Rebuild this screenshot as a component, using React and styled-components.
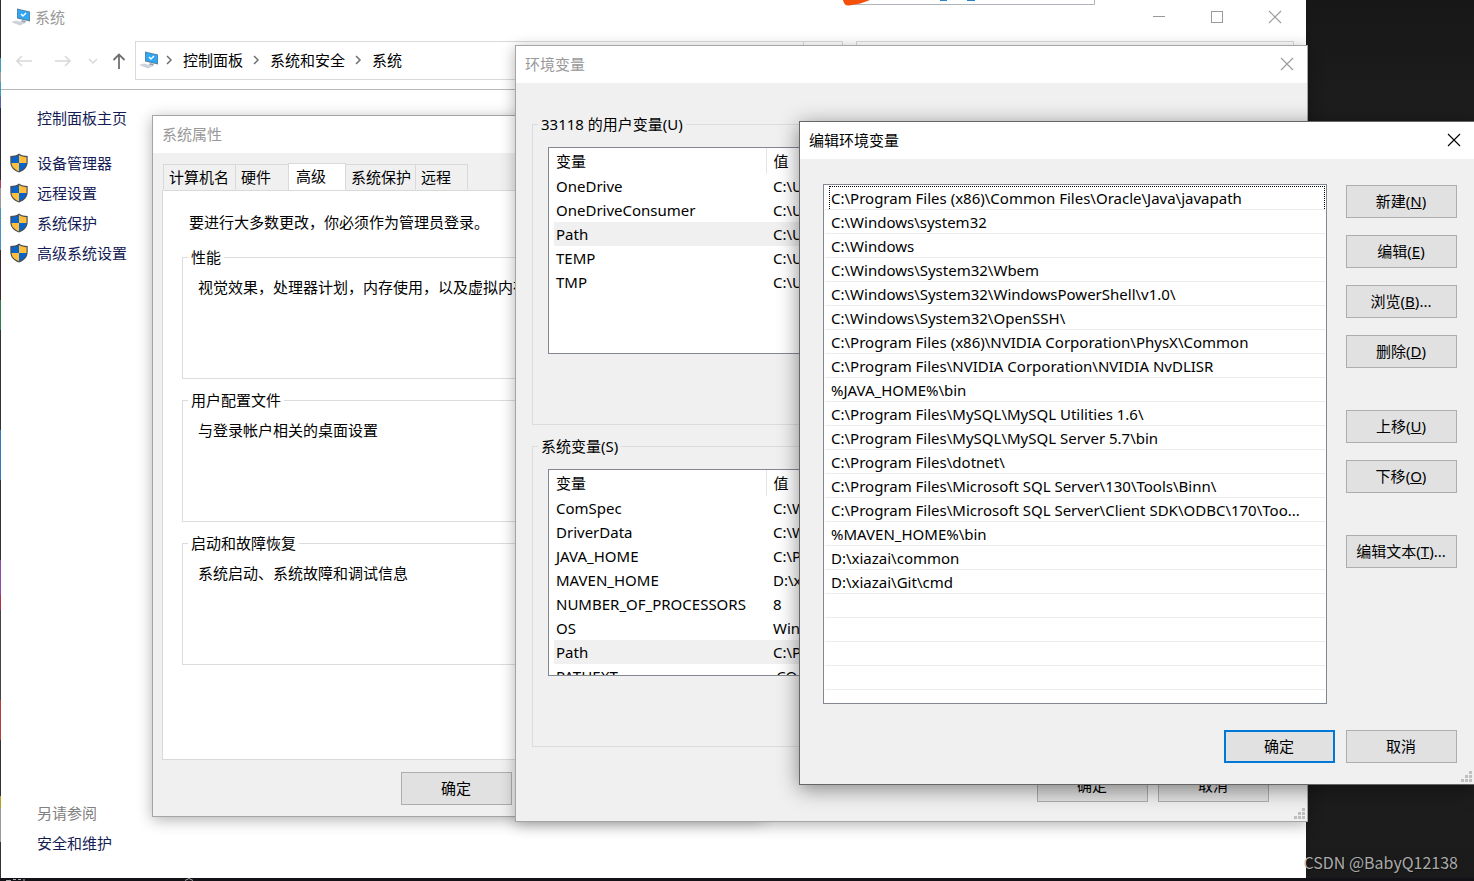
import React from 'react';
import styled, { createGlobalStyle, css } from 'styled-components';

const GlobalStyle = createGlobalStyle`
  *, *::before, *::after { box-sizing: border-box; }
  html, body { margin: 0; height: 100%; }
  body, button, input {
    font-family: "Noto Sans", "Noto Sans CJK SC", sans-serif;
    font-size: 15px;
    line-height: 24px;
    color: #000;
  }
  body { overflow: hidden; }
  #root { height: 100%; }
`;

const Desktop = styled.main`
  position: relative;
  height: 100%;
  min-height: 840px;
  overflow: hidden;
  background: linear-gradient(#171717, #202020 20%, #1d1d1d 90%, #1a1a1a);
`;

const EdgeStrip = styled.div`
  position: absolute;
  left: 0;
  top: 0;
  bottom: 0;
  width: 1px;
  background: linear-gradient(
    #2b2b30 0 58px, #3c9db5 58px 72px, #a0a0a0 72px 82px, #3c9db5 82px 96px,
    #5560a8 96px 108px, #2b2b40 108px 180px, #a84060 180px 188px, #999 188px 208px,
    #4a90c0 208px 250px, #3a2a2a 250px 300px, #2f7d4f 300px 330px, #333 330px 430px,
    #357abd 430px 480px, #333 480px 560px, #8a4ab0 560px 595px, #b03048 595px 610px,
    #444 610px 700px, #b04040 700px 740px, #333 740px 796px, #b5a020 796px 808px,
    #999 808px 842px, #333 842px
  );
`;

/* ---------- windows ---------- */

const Win = styled.section`
  position: absolute;
  display: flex;
  flex-direction: column;
  background: ${(p) => (p.$plain ? '#fff' : '#f0f0f0')};
  color: #000;
`;

const MainWindow = styled(Win)`
  left: 1px;
  right: 168px;
  top: 0;
  bottom: 3px;
`;

const dialogFrame = css`
  border: 1px solid #a5a5a5;
  box-shadow: 0 3px 14px rgba(0, 0, 0, 0.3);
`;

const PropertiesWindow = styled(Win)`
  ${dialogFrame}
  left: 152px;
  top: 115px;
  width: 611px;
`;

const VariablesWindow = styled(Win)`
  ${dialogFrame}
  left: 515px;
  right: 166px;
  top: 45px;
`;

const EditWindow = styled(Win)`
  left: 799px;
  right: 0;
  top: 121px;
  border: 1px solid #666;
  border-right: 0;
  box-shadow: 0 4px 20px rgba(0, 0, 0, 0.45);
`;

const TitleBar = styled.header`
  display: flex;
  align-items: center;
  justify-content: space-between;
  height: 37px;
  padding: 0 13px 2px 9px;
  background: #fff;
  color: ${(p) => (p.$active ? '#000' : '#999')};
`;

const Title = styled.h2`
  margin: 0;
  font-size: 15px;
  font-weight: 400;
`;

const IconButton = styled.button`
  display: grid;
  place-items: center;
  padding: 0;
  border: 0;
  background: none;
  color: inherit;
  svg { display: block; }
`;

const PushButton = styled.button`
  width: 111px;
  height: 33px;
  padding: 0 1px 2px 0;
  border: ${(p) => (p.$primary ? '2px solid #0078d7' : '1px solid #adadad')};
  background: #e1e1e1;
`;

const Grip = styled.svg`
  position: absolute;
  right: 2px;
  bottom: 2px;
  fill: #bfbfbf;
`;

/* ---------- main window ---------- */

const MainTitle = styled.header`
  display: flex;
  align-items: center;
  height: 34px;
  padding: 0 17px 0 10px;
  gap: 4px;
  color: #999;
`;

const Caption = styled.div`
  display: flex;
  gap: 30px;
  margin-left: auto;
  button { width: 28px; height: 28px; }
`;

const NavRow = styled.nav`
  display: flex;
  align-items: center;
  margin-top: 7px;
  height: 49px;
  padding: 0 12px 10px 14px;
  border-bottom: 1px solid #b8b8bc;
`;

const NavButtons = styled.div`
  display: grid;
  grid-template-columns: 39px 34px 24px 23px;
  align-items: center;
  justify-items: start;
  padding-top: 2px;
  color: #d8d8d8;
`;

const AddressBar = styled.div`
  display: flex;
  flex: 711 1 0;
  align-items: center;
  height: 39px;
  border: 1px solid #d9d9d9;
  padding-left: 3px;
`;

const Crumbs = styled.ol`
  display: flex;
  flex: 1;
  align-items: center;
  margin: 0;
  padding: 0;
  list-style: none;
  li { display: flex; align-items: center; }
  svg { margin: 0 10px; }
  li:first-child svg { margin-left: 7px; }
  a { color: #000; text-decoration: none; }
`;

const AddressEnd = styled.div`
  width: 39px;
  height: 100%;
  border-left: 1px solid #d9d9d9;
`;

const SearchBox = styled.input`
  flex: 437 1 0;
  min-width: 0;
  height: 39px;
  margin-left: 13px;
  border: 1px solid #d9d9d9;
  background: #fff;
`;

const Sidebar = styled.aside`
  display: flex;
  flex: 1;
  flex-direction: column;
  justify-content: space-between;
  width: 151px;
  padding: 13px 0 20px 8px;
`;

const LinkList = styled.div`
  display: flex;
  flex-direction: column;
`;

const SideLink = styled.a`
  display: grid;
  grid-template-columns: 20px 1fr;
  column-gap: 8px;
  align-items: center;
  height: 30px;
  margin-bottom: ${(p) => (p.$spaced ? '15px' : '0')};
  color: #151c55;
  text-decoration: none;
  white-space: nowrap;
  span { grid-column: 2; }
`;

const SideHeading = styled.p`
  margin: 0 0 0 28px;
  line-height: 30px;
  color: #808080;
`;

const BackgroundWindowEdge = styled.svg`
  position: absolute;
  left: 843px;
  top: 0;
  display: block;
`;

const TaskbarEdge = styled.svg`
  position: absolute;
  left: 0;
  bottom: 0;
  width: 100%;
  height: 3px;
`;

/* ---------- system properties ---------- */

const Tabs = styled.div`
  display: flex;
  align-items: flex-end;
  height: 37px;
  padding-left: 11px;
`;

const Tab = styled.button`
  width: ${(p) => p.$width}px;
  height: ${(p) => (p.$active ? 28 : 26)}px;
  margin-left: -1px;
  margin-bottom: ${(p) => (p.$active ? -1 : 0)}px;
  padding: ${(p) => (p.$active ? '0 7px 3px' : '0 5px')};
  border: 1px solid #d9d9d9;
  border-bottom: ${(p) => (p.$active ? '0' : '1px solid transparent')};
  background: ${(p) => (p.$active ? '#fff' : '#f0f0f0')};
  text-align: left;
  white-space: nowrap;
`;

const TabPanel = styled.div`
  margin: 0 9px;
  padding: 19px 19px 84px;
  border: 1px solid #d9d9d9;
  background: #fff;
`;

const Notice = styled.p`
  margin: 0 0 12px 7px;
`;

const Group = styled.fieldset`
  min-width: 0;
  margin: 0;
  padding: 0;
  border: 1px solid #dcdcdc;
  legend {
    margin-left: 5px;
    padding: 0 3px;
    line-height: 22px;
  }
`;

const SettingGroup = styled(Group)`
  height: 133px;
  margin-bottom: 10px;
  p { margin: 7px 0 0 15px; }
`;

const PropertiesFooter = styled.footer`
  display: grid;
  grid-template-columns: repeat(3, 111px);
  gap: 10px;
  justify-content: end;
  padding: 12px 8px 11px 0;
`;

/* ---------- environment variables ---------- */

const VariablesBody = styled.div`
  display: flex;
  flex-direction: column;
  gap: 10px;
  padding: 30px 16px 22px;
`;

const VariablesGroup = styled(Group)`
  height: 312px;
`;

const TableBox = styled.div`
  height: 207px;
  margin: 12px 15px 0;
  padding: 0 1px 1px 5px;
  overflow: hidden;
  border: 1px solid #828790;
  background: #fff;
`;

const VariableTable = styled.table`
  width: 100%;
  border-collapse: collapse;
  table-layout: fixed;
  th, td {
    height: 24px;
    padding: 0 2px;
    font-weight: 400;
    text-align: left;
    white-space: nowrap;
  }
  th { height: 26px; }
  th:first-child { width: 212px; border-right: 1px solid #e5e5e5; }
  th + th, td + td { padding-left: 7px; }
`;

const VariableRow = styled.tr`
  background: ${(p) => (p.$selected ? '#f0f0f0' : 'transparent')};
`;

const VariablesFooter = styled.footer`
  display: flex;
  justify-content: flex-end;
  gap: 10px;
  padding: 0 38px 19px 0;
`;

/* ---------- edit dialog ---------- */

const EditBody = styled.div`
  display: grid;
  grid-template-columns: 1fr 111px;
  column-gap: 19px;
  padding: 25px 17px 0 23px;
`;

const PathList = styled.ul`
  height: 520px;
  margin: 0;
  padding: 1px;
  overflow: hidden;
  border: 1px solid #828790;
  background: #fff;
  list-style: none;
`;

const PathItem = styled.li`
  height: 24px;
  padding-left: 6px;
  border-bottom: 1px solid #ececec;
  white-space: nowrap;
  span {
    display: block;
    height: 23px;
    margin-left: -2px;
    padding-left: 2px;
    line-height: 24px;
  }
  ${(p) => p.$focused && css`
    span {
      border: 1px dotted #000;
      border-bottom: 0;
      padding-left: 1px;
      line-height: 22px;
    }
  `}
`;

const ActionColumn = styled.div`
  display: flex;
  flex-direction: column;
  gap: 42px;
  padding-top: 1px;
`;

const ActionGroup = styled.div`
  display: flex;
  flex-direction: column;
  gap: 17px;
`;

const EditFooter = styled.footer`
  display: flex;
  justify-content: flex-end;
  gap: 11px;
  padding: 26px 17px 21px 0;
`;

const Watermark = styled.p`
  position: absolute;
  right: 16px;
  bottom: 7px;
  margin: 0;
  font-family: "Noto Sans CJK SC", sans-serif;
  font-size: 16px;
  color: rgba(190, 190, 190, 0.9);
  text-shadow: 1px 1px 1px rgba(0, 0, 0, 0.4);
`;

/* ---------- drawings ---------- */

const ComputerIcon = () => (
  <svg width="20" height="18" viewBox="0 0 20 18" aria-hidden="true">
    <path d="M6 0.5 L19 3.500 V13.500 L6 10.500 Z" fill="#5b7f9c" />
    <path d="M6.800 1.500 L18.200 4.200 V12.300 L6.800 9.600 Z" fill="#2ea8f5" />
    <path d="M10 6 L12 8 L15 5" stroke="#fff" strokeWidth="1.4" fill="none" />
    <path d="M11 12 L15 13 L14 15 L10 14 Z" fill="#9aa7b0" />
    <path d="M0 14 L5 12.500 L14 15 L9 17.500 Z" fill="#ccd3da" />
  </svg>
);

const ShieldIcon = () => (
  <svg width="20" height="20" viewBox="0 0 20 20" aria-hidden="true">
    <path d="M10 0.5 C12.5 2.3 15.5 3 18.7 3 V9 C18.7 14.5 14.8 17.8 10 19.6 C5.2 17.8 1.3 14.5 1.3 9 V3 C4.5 3 7.5 2.3 10 0.5 Z" fill="#4b4f55" />
    <path d="M10 2 V10 H2.5 V4.2 C5.3 4.1 7.9 3.4 10 2 Z" fill="#0a64c8" />
    <path d="M10 2 V10 H17.5 V4.2 C14.7 4.1 12.1 3.4 10 2 Z" fill="#ffbe3c" />
    <path d="M10 10 V18.3 C6 16.7 2.7 14 2.5 10 Z" fill="#ffbe3c" />
    <path d="M10 10 V18.3 C14 16.7 17.3 14 17.5 10 Z" fill="#0a64c8" />
  </svg>
);

const Chevron = () => (
  <svg width="7" height="10" viewBox="0 0 7 10" fill="none" stroke="#707070" strokeWidth="1.5" aria-hidden="true">
    <path d="M1 1 L5 5 L1 9" />
  </svg>
);

const CloseIcon = () => (
  <svg width="14" height="14" viewBox="0 0 14 14" fill="none" stroke="currentColor" strokeWidth="1.1" aria-hidden="true">
    <path d="M1 1 L13 13 M13 1 L1 13" />
  </svg>
);

const GripIcon = () => (
  <Grip width="11" height="11" viewBox="0 0 11 11" aria-hidden="true">
    {[[8, 0], [4, 4], [8, 4], [0, 8], [4, 8], [8, 8]].map(([x, y]) => (
      <rect key={`${x}-${y}`} x={x} y={y} width="3" height="3" />
    ))}
  </Grip>
);

/* ---------- content ---------- */

const sideLinks = ['设备管理器', '远程设置', '系统保护', '高级系统设置'];

const tabs = [
  { label: '计算机名', width: 73 },
  { label: '硬件', width: 54 },
  { label: '高级', width: 58, active: true },
  { label: '系统保护', width: 71 },
  { label: '远程', width: 53 },
];

const settings = [
  ['性能', '视觉效果，处理器计划，内存使用，以及虚拟内存'],
  ['用户配置文件', '与登录帐户相关的桌面设置'],
  ['启动和故障恢复', '系统启动、系统故障和调试信息'],
];

const userVariables = [
  ['OneDrive', 'C:\\U'],
  ['OneDriveConsumer', 'C:\\U'],
  ['Path', 'C:\\U'],
  ['TEMP', 'C:\\U'],
  ['TMP', 'C:\\U'],
];

const systemVariables = [
  ['ComSpec', 'C:\\W'],
  ['DriverData', 'C:\\W'],
  ['JAVA_HOME', 'C:\\P'],
  ['MAVEN_HOME', 'D:\\x'],
  ['NUMBER_OF_PROCESSORS', '8'],
  ['OS', 'Win'],
  ['Path', 'C:\\P'],
  ['PATHEXT', '.CO'],
];

const paths = [
  'C:\\Program Files (x86)\\Common Files\\Oracle\\Java\\javapath',
  'C:\\Windows\\system32',
  'C:\\Windows',
  'C:\\Windows\\System32\\Wbem',
  'C:\\Windows\\System32\\WindowsPowerShell\\v1.0\\',
  'C:\\Windows\\System32\\OpenSSH\\',
  'C:\\Program Files (x86)\\NVIDIA Corporation\\PhysX\\Common',
  'C:\\Program Files\\NVIDIA Corporation\\NVIDIA NvDLISR',
  '%JAVA_HOME%\\bin',
  'C:\\Program Files\\MySQL\\MySQL Utilities 1.6\\',
  'C:\\Program Files\\MySQL\\MySQL Server 5.7\\bin',
  'C:\\Program Files\\dotnet\\',
  'C:\\Program Files\\Microsoft SQL Server\\130\\Tools\\Binn\\',
  'C:\\Program Files\\Microsoft SQL Server\\Client SDK\\ODBC\\170\\Too...',
  '%MAVEN_HOME%\\bin',
  'D:\\xiazai\\common',
  'D:\\xiazai\\Git\\cmd',
  '', '', '', '',
];

const actions = [
  [['新建', 'N'], ['编辑', 'E'], ['浏览', 'B', '...'], ['删除', 'D']],
  [['上移', 'U'], ['下移', 'O']],
  [['编辑文本', 'T', '...']],
];

const DialogTitle = ({ children, active }) => (
  <TitleBar $active={active}>
    <Title>{children}</Title>
    <IconButton type="button" aria-label="关闭"><CloseIcon /></IconButton>
  </TitleBar>
);

const Variables = ({ legend, rows }) => (
  <VariablesGroup>
    <legend>{legend}</legend>
    <TableBox>
      <VariableTable>
        <thead>
          <tr><th scope="col">变量</th><th scope="col">值</th></tr>
        </thead>
        <tbody>
          {rows.map(([name, value]) => (
            <VariableRow key={name} $selected={name === 'Path'}>
              <td>{name}</td><td>{value}</td>
            </VariableRow>
          ))}
        </tbody>
      </VariableTable>
    </TableBox>
  </VariablesGroup>
);

export default function App() {
  return (
    <Desktop>
      <GlobalStyle />
      <EdgeStrip />
      <TaskbarEdge aria-hidden="true">
        <rect width="100%" height="3" fill="#141216" />
        <path d="M6 2.5 H11 M13 1.5 H16 M18 1.5 H21 M23 2 H25 M185 2.5 L189 0.5 L193 2.5" stroke="#aaa" fill="none" />
      </TaskbarEdge>

      <MainWindow $plain>
        <MainTitle>
          <ComputerIcon />
          <Title as="h1">系统</Title>
          <Caption>
            <IconButton type="button" aria-label="最小化">
              <svg width="14" height="14" stroke="#999"><path d="M1 6.5 H13" /></svg>
            </IconButton>
            <IconButton type="button" aria-label="最大化">
              <svg width="14" height="14" stroke="#999" fill="none"><rect x="1.5" y="1.5" width="11" height="11" /></svg>
            </IconButton>
            <IconButton type="button" aria-label="关闭"><CloseIcon /></IconButton>
          </Caption>
        </MainTitle>
        <NavRow>
          <NavButtons>
            <IconButton type="button" aria-label="后退">
              <svg width="18" height="14" fill="none" stroke="#d8d8d8" strokeWidth="1.5"><path d="M7 2 L2 7 L7 12 M2 7 H17" /></svg>
            </IconButton>
            <IconButton type="button" aria-label="前进">
              <svg width="18" height="14" fill="none" stroke="#d8d8d8" strokeWidth="1.5"><path d="M11 2 L16 7 L11 12 M16 7 H1" /></svg>
            </IconButton>
            <IconButton type="button" aria-label="最近位置">
              <svg width="10" height="8" fill="none" stroke="#d8d8d8" strokeWidth="1.5"><path d="M1 2 L5 6 L9 2" /></svg>
            </IconButton>
            <IconButton type="button" aria-label="上移一级">
              <svg width="14" height="18" fill="none" stroke="#707070" strokeWidth="1.8"><path d="M1.5 8 L7 2.5 L12.5 8 M7 3 V17" /></svg>
            </IconButton>
          </NavButtons>
          <AddressBar>
            <ComputerIcon />
            <Crumbs>
              {['控制面板', '系统和安全', '系统'].map((c) => (
                <li key={c}><Chevron /><a href="#crumb">{c}</a></li>
              ))}
            </Crumbs>
            <AddressEnd />
          </AddressBar>
          <SearchBox type="search" aria-label="搜索" />
        </NavRow>
        <Sidebar>
          <LinkList>
            <SideLink href="#home" $spaced><span>控制面板主页</span></SideLink>
            {sideLinks.map((l) => (
              <SideLink key={l} href="#link"><ShieldIcon /><span>{l}</span></SideLink>
            ))}
          </LinkList>
          <LinkList>
            <SideHeading>另请参阅</SideHeading>
            <SideLink href="#security"><span>安全和维护</span></SideLink>
          </LinkList>
        </Sidebar>
      </MainWindow>

      <BackgroundWindowEdge width="253" height="6" aria-hidden="true">
        <path d="M8 4.5 H251.5 V0" fill="#fff" stroke="#b0b4bb" />
        <path d="M0 0 H27 Q18 4 6 5.5 Q1 6 0 0 Z" fill="#f4500c" />
        <path d="M97 0.5 H104 M124 0.5 H132" stroke="#2a7fc8" />
      </BackgroundWindowEdge>

      <PropertiesWindow>
        <TitleBar><Title>系统属性</Title></TitleBar>
        <Tabs role="tablist">
          {tabs.map((t) => (
            <Tab key={t.label} type="button" role="tab" aria-selected={!!t.active} $width={t.width} $active={t.active}>
              {t.label}
            </Tab>
          ))}
        </Tabs>
        <TabPanel role="tabpanel">
          <Notice>要进行大多数更改，你必须作为管理员登录。</Notice>
          {settings.map(([name, text]) => (
            <SettingGroup key={name}>
              <legend>{name}</legend>
              <p>{text}</p>
            </SettingGroup>
          ))}
        </TabPanel>
        <PropertiesFooter><PushButton type="button">确定</PushButton></PropertiesFooter>
      </PropertiesWindow>

      <VariablesWindow>
        <DialogTitle>环境变量</DialogTitle>
        <VariablesBody>
          <Variables legend="33118 的用户变量(U)" rows={userVariables} />
          <Variables legend="系统变量(S)" rows={systemVariables} />
        </VariablesBody>
        <VariablesFooter>
          <PushButton type="button">确定</PushButton>
          <PushButton type="button">取消</PushButton>
        </VariablesFooter>
        <GripIcon />
      </VariablesWindow>

      <EditWindow role="dialog" aria-label="编辑环境变量">
        <DialogTitle active>编辑环境变量</DialogTitle>
        <EditBody>
          <PathList>
            {paths.map((p, i) => (
              <PathItem key={i} $focused={i === 0}><span>{p}</span></PathItem>
            ))}
          </PathList>
          <ActionColumn>
            {actions.map((group, i) => (
              <ActionGroup key={i}>
                {group.map(([label, key, tail]) => (
                  <PushButton key={key} type="button">{label}(<u>{key}</u>){tail}</PushButton>
                ))}
              </ActionGroup>
            ))}
          </ActionColumn>
        </EditBody>
        <EditFooter>
          <PushButton type="button" $primary>确定</PushButton>
          <PushButton type="button">取消</PushButton>
        </EditFooter>
        <GripIcon />
      </EditWindow>

      <Watermark>CSDN @BabyQ12138</Watermark>
    </Desktop>
  );
}
